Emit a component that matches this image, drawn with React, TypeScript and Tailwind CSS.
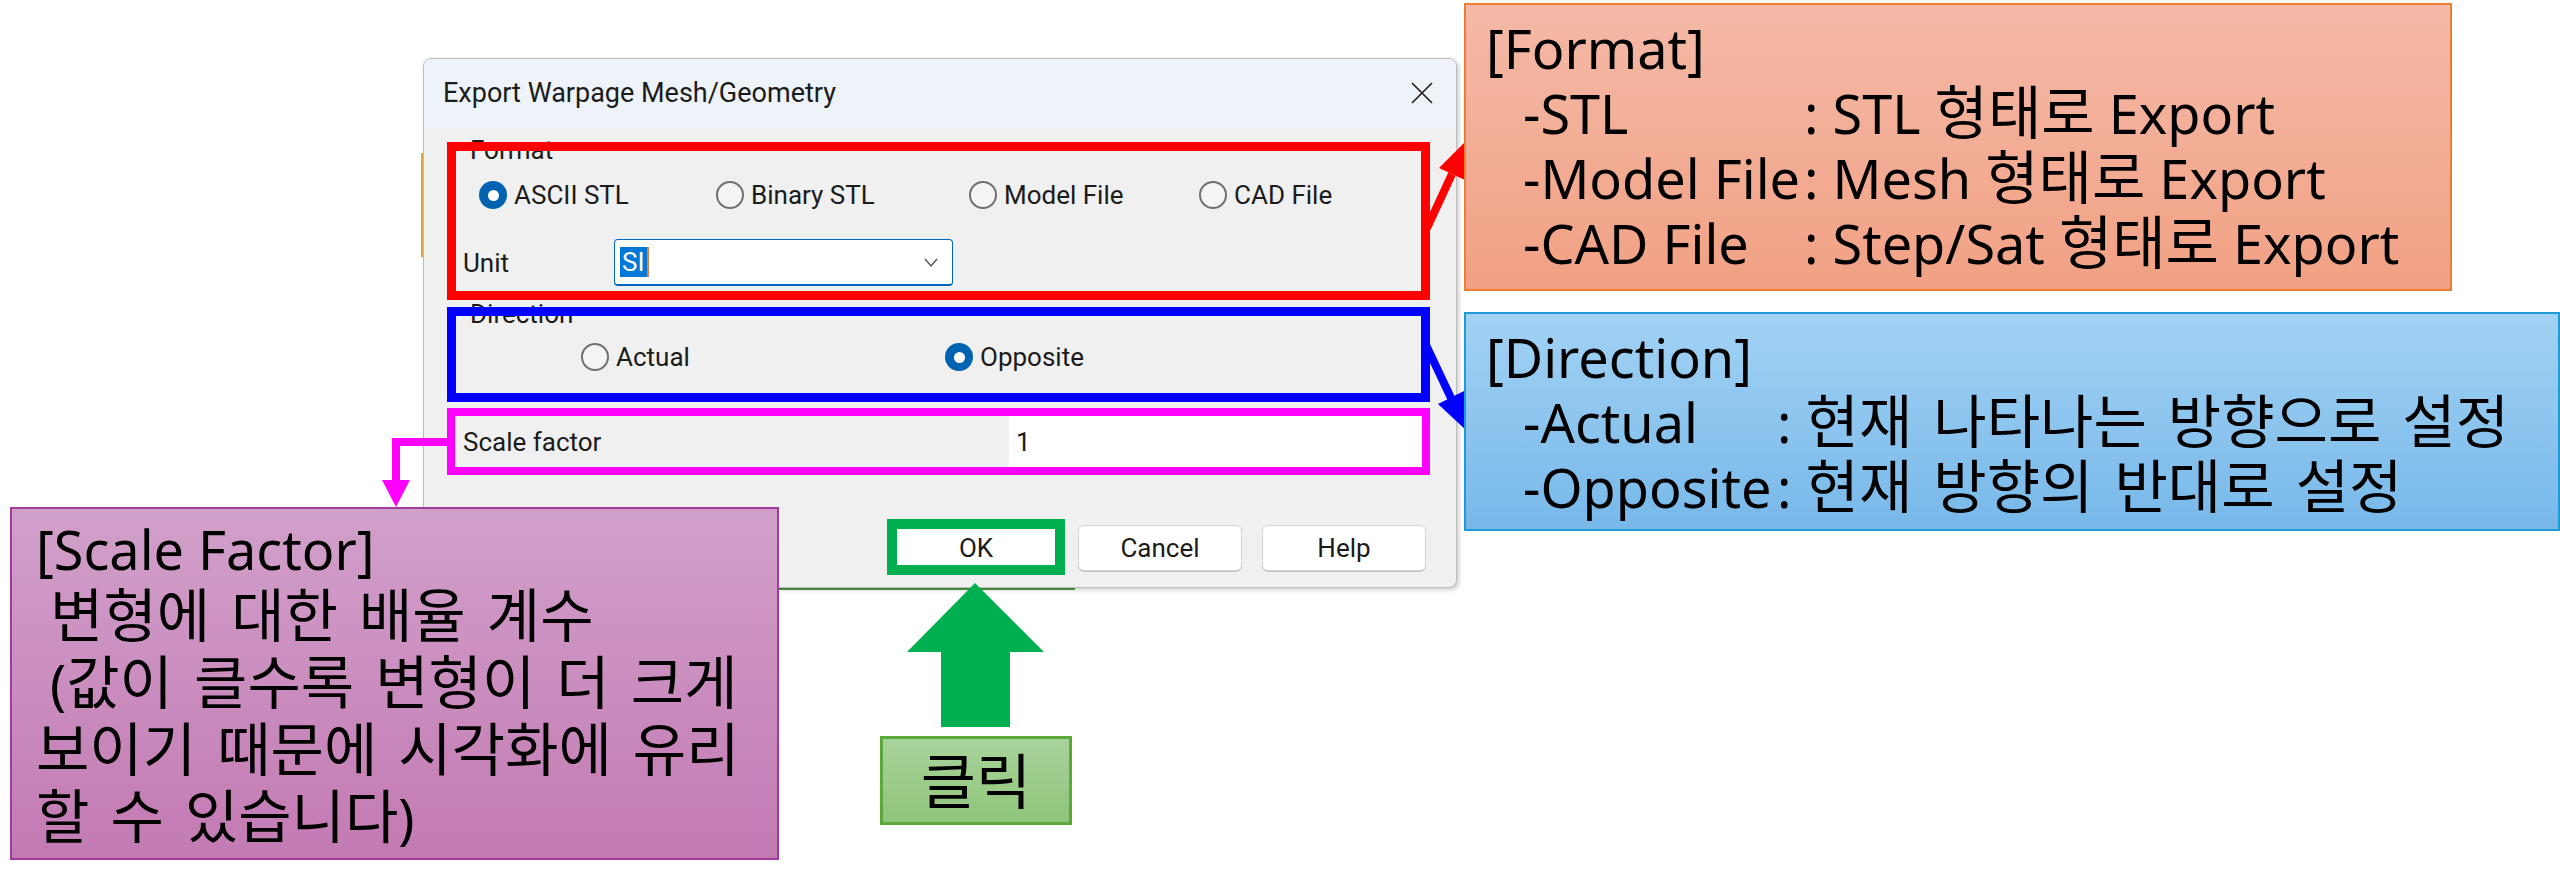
import React from 'react';

const NOTE_FONT = "font-['Noto_Sans','Noto_Sans_CJK_KR',sans-serif]";

// hangul in the notes is drawn wider than the latin text around it
function K({ children }: { children: React.ReactNode }) {
  return <span className="text-[58px] leading-[54px] [word-spacing:6px]">{children}</span>;
}

function Radio({ checked, label }: { checked?: boolean; label: string }) {
  return (
    <div className="flex items-center gap-[7px]">
      {checked ? (
        <span className="flex h-[28px] w-[28px] shrink-0 items-center justify-center rounded-full bg-[#0063b1]">
          <span className="h-[11px] w-[11px] rounded-full bg-white" />
        </span>
      ) : (
        <span className="h-[28px] w-[28px] shrink-0 rounded-full border-2 border-[#707070] bg-[#f4f4f4]" />
      )}
      <span>{label}</span>
    </div>
  );
}

function Button({ children }: { children: React.ReactNode }) {
  return (
    <div className="flex h-[46px] w-[164px] items-center justify-center rounded-[6px] border border-[#d4d4d4] bg-white shadow-[0_1px_0_#c2c2c2]">
      {children}
    </div>
  );
}

function Dialog() {
  return (
    <div className="absolute left-[423px] top-[58px] flex h-[530px] w-[1034px] flex-col overflow-hidden rounded-[8px] border border-[#bdbdbd] bg-[#f0f0f0] font-['Roboto',sans-serif] text-[26px] leading-[30px] text-[#1b1b1b] shadow-[2px_2px_4px_rgba(0,0,0,0.2)]">
      <div className="flex h-[68px] shrink-0 items-center justify-between bg-[#eef2f9] pl-[19px] pr-[23px]">
        <span className="text-[27px] leading-[32px]">Export Warpage Mesh/Geometry</span>
        <svg width="22" height="22" viewBox="0 0 22 22" fill="none" stroke="#222" strokeWidth="1.7">
          <path d="M1 1 L21 21 M21 1 L1 21" />
        </svg>
      </div>

      {/* Format */}
      <div className="relative ml-[23px] mr-[26px] mt-[15px] flex h-[158px] shrink-0 flex-col">
        <div className="-mt-[7px] ml-[23px] h-[30px]">Format</div>
        <div className="mt-[15px] flex h-[30px] items-center pl-[32px]">
          <div className="w-[237px]">
            <Radio checked label="ASCII STL" />
          </div>
          <div className="w-[253px]">
            <Radio label="Binary STL" />
          </div>
          <div className="w-[230px]">
            <Radio label="Model File" />
          </div>
          <Radio label="CAD File" />
        </div>
        <div className="mt-[29px] flex items-center pl-[16px]">
          <span className="w-[151px]">Unit</span>
          <div className="flex h-[47px] w-[339px] items-center rounded-[4px] border border-b-2 border-[#0067c0] bg-white pl-[5px]">
            <span className="bg-[#0078d7] px-[2px] text-white">SI</span>
            <span className="h-[30px] w-[2px] bg-[#e0803a]" />
            <svg className="ml-auto mr-[14px]" width="14" height="9" viewBox="0 0 14 9" fill="none" stroke="#555" strokeWidth="1.4">
              <path d="M1 1 L7 8 L13 1" />
            </svg>
          </div>
        </div>
        <div className="pointer-events-none absolute inset-0 border-[9px] border-[#ff0000]" />
      </div>

      {/* Direction */}
      <div className="relative ml-[23px] mr-[26px] mt-[7px] flex h-[95px] shrink-0 flex-col">
        <div className="-mt-[8px] ml-[23px] h-[30px]">Direction</div>
        <div className="mt-[13px] flex h-[30px] items-center pl-[134px]">
          <div className="w-[364px]">
            <Radio label="Actual" />
          </div>
          <Radio checked label="Opposite" />
        </div>
        <div className="pointer-events-none absolute inset-0 border-[9px] border-[#0000ff]" />
      </div>

      {/* Scale factor */}
      <div className="relative ml-[23px] mr-[26px] mt-[6px] flex h-[67px] shrink-0">
        <div className="flex w-[562px] items-center pl-[16px]">Scale factor</div>
        <div className="flex flex-1 items-center bg-white pl-[7px]">1</div>
        <div className="pointer-events-none absolute inset-0 border-[8px] border-[#ff00ff]" />
      </div>

      <div className="mr-[30px] mt-[50px] flex justify-end gap-[20px]">
        <div className="relative">
          <Button>OK</Button>
          <div className="pointer-events-none absolute -left-[7px] -top-[6px] h-[56px] w-[178px] border-[10px] border-[#00b050]" />
        </div>
        <Button>Cancel</Button>
        <Button>Help</Button>
      </div>
    </div>
  );
}

function Arrows() {
  return (
    <svg className="pointer-events-none absolute left-0 top-0" width="2560" height="877" viewBox="0 0 2560 877">
      {/* red: format box -> note */}
      <line x1="1427" y1="228" x2="1452" y2="174" stroke="#ff0000" strokeWidth="8" />
      <polygon points="1439,168 1468,139 1465,180" fill="#ff0000" />
      {/* blue: direction box -> note */}
      <line x1="1426" y1="345" x2="1451" y2="398" stroke="#0000ff" strokeWidth="8" />
      <polygon points="1438,404 1464,391 1468,432" fill="#0000ff" />
      {/* magenta: scale factor -> note */}
      <polyline points="449,442 396,442 396,484" fill="none" stroke="#ff00ff" strokeWidth="8" />
      <polygon points="382,480 410,480 396,507" fill="#ff00ff" />
      {/* green: click arrow */}
      <polygon points="975,583 907,652 941,652 941,727 1010,727 1010,652 1044,652" fill="#00b050" />
    </svg>
  );
}

export default function App() {
  return (
    <div className="relative h-[877px] w-[2560px] overflow-hidden bg-white">
      {/* bits of windows behind the dialog */}
      <div className="absolute left-[421px] top-[153px] h-[104px] w-[2px] bg-[#d6ac3c]" />
      <div className="absolute left-[779px] top-[588px] h-[2px] w-[296px] bg-[#4e9c40]" />

      <Dialog />
      <Arrows />

      <div
        className={`${NOTE_FONT} absolute left-[1464px] top-[3px] h-[288px] w-[988px] border-2 border-[#ed7d31] bg-linear-to-b from-[#f4b9a7] to-[#f1a184] pl-[20px] pt-[11px] text-[54px] leading-[65px] text-black`}
      >
        <div>[Format]</div>
        <div className="ml-[37px] whitespace-pre">
          <div className="flex">
            <span className="w-[281px] shrink-0">-STL</span>
            <span>
              : STL <K>형태로</K> Export
            </span>
          </div>
          <div className="flex">
            <span className="w-[281px] shrink-0">-Model File</span>
            <span>
              : Mesh <K>형태로</K> Export
            </span>
          </div>
          <div className="flex">
            <span className="w-[281px] shrink-0">-CAD File</span>
            <span>
              : Step/Sat <K>형태로</K> Export
            </span>
          </div>
        </div>
      </div>

      <div
        className={`${NOTE_FONT} absolute left-[1464px] top-[312px] h-[219px] w-[1096px] border-2 border-[#1e9bd7] bg-linear-to-b from-[#a2d2f4] to-[#77b8e9] pl-[20px] pt-[11px] text-[54px] leading-[65px] text-black`}
      >
        <div>[Direction]</div>
        <div className="ml-[37px] whitespace-pre">
          <div className="flex">
            <span className="w-[254px] shrink-0">-Actual</span>
            <span>
              : <K>현재 나타나는 방향으로 설정</K>
            </span>
          </div>
          <div className="flex">
            <span className="w-[254px] shrink-0">-Opposite</span>
            <span>
              : <K>현재 방향의 반대로 설정</K>
            </span>
          </div>
        </div>
      </div>

      <div
        className={`${NOTE_FONT} absolute left-[10px] top-[507px] h-[353px] w-[769px] whitespace-pre border-2 border-[#a23a9e] bg-linear-to-b from-[#d1a0ca] to-[#c37ab3] pl-[24px] pt-[7px] text-[54px] leading-[67px] text-black`}
      >
        <div>[Scale Factor]</div>
        <div>
          {' '}
          <K>변형에 대한 배율 계수</K>
        </div>
        <div>
          {' ('}
          <K>값이 클수록 변형이 더 크게</K>
        </div>
        <div>
          <K>보이기 때문에 시각화에 유리</K>
        </div>
        <div>
          <K>할 수 있습니다</K>)
        </div>
      </div>

      <div
        className={`${NOTE_FONT} absolute left-[880px] top-[736px] flex h-[89px] w-[192px] items-center justify-center border-[3px] border-[#5aa93a] bg-linear-to-b from-[#a9d39b] to-[#8fc57b] text-[60px] leading-[62px] text-black`}
      >
        클릭
      </div>
    </div>
  );
}
